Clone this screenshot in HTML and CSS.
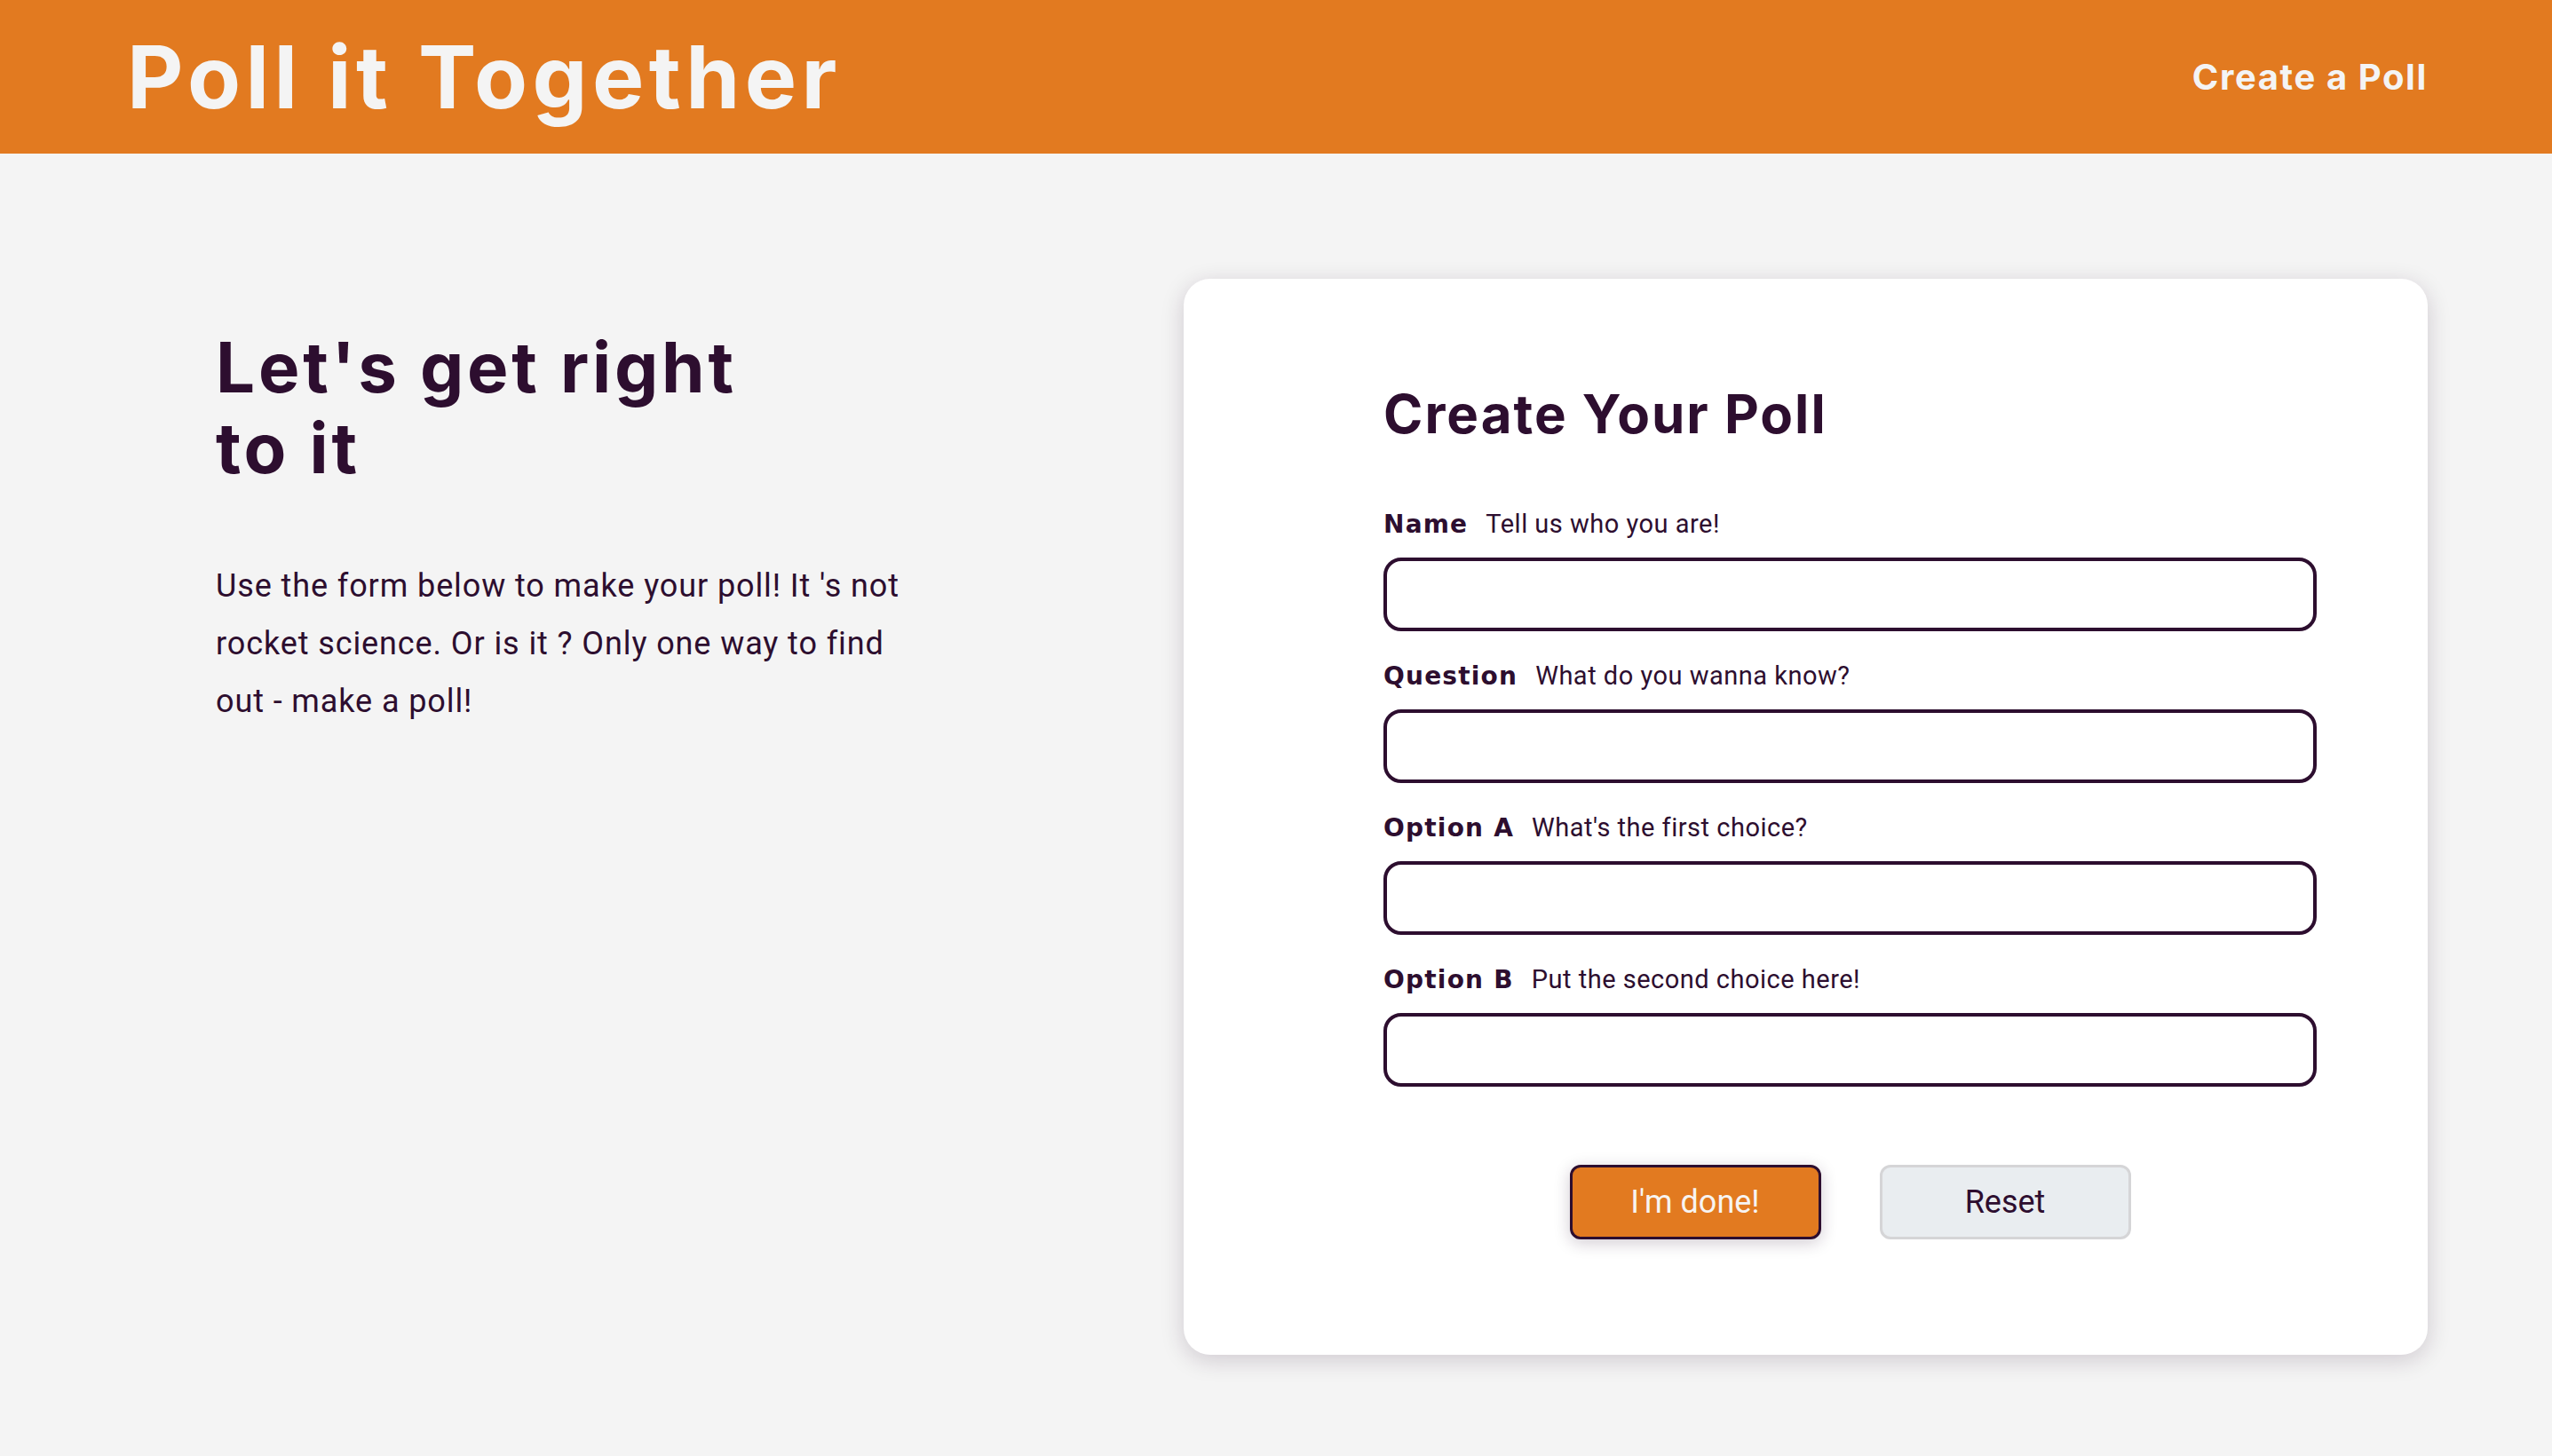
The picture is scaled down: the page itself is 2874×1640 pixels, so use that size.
FILE: index.html
```html
<!DOCTYPE html>
<html lang="en">
<head>
<meta charset="utf-8">
<title>Poll it Together</title>
<link rel="stylesheet" href="styles.css">
</head>
<body>
<header class="topbar">
  <div class="brand">Poll it Together</div>
  <nav class="nav"><a class="nav-link" href="#">Create a Poll</a></nav>
</header>
<main class="page">
  <section class="intro">
    <h1 class="intro-title">Let's get right to it</h1>
    <p class="intro-text">Use the form below to make your poll! It 's not rocket science. Or is it ? Only one way to find out - make a poll!</p>
  </section>
  <section class="card">
    <h2 class="card-title">Create Your Poll</h2>
    <form class="poll-form">
      <div class="field">
        <label class="field-label"><strong>Name</strong><span>Tell us who you are!</span></label>
        <input class="field-input" type="text">
      </div>
      <div class="field">
        <label class="field-label"><strong>Question</strong><span>What do you wanna know?</span></label>
        <input class="field-input" type="text">
      </div>
      <div class="field">
        <label class="field-label"><strong>Option A</strong><span>What's the first choice?</span></label>
        <input class="field-input" type="text">
      </div>
      <div class="field">
        <label class="field-label"><strong>Option B</strong><span>Put the second choice here!</span></label>
        <input class="field-input" type="text">
      </div>
      <div class="actions">
        <button class="btn btn-primary" type="button">I'm done!</button>
        <button class="btn btn-secondary" type="reset">Reset</button>
      </div>
    </form>
  </section>
</main>
</body>
</html>
```
FILE: styles.css
```css
* { box-sizing: border-box; }
html, body { margin: 0; padding: 0; }
body {
  background: #f4f4f4;
  color: #2d0e2f;
  font-family: Roboto, "Liberation Sans", sans-serif;
  width: 2874px;
  height: 1640px;
  overflow: hidden;
}
.topbar {
  height: 173px;
  background: #e27a20;
  display: flex;
  align-items: center;
  justify-content: space-between;
  padding: 0 140px 0 143px;
}
.brand {
  font-family: Inter, "Noto Sans", sans-serif;
  font-weight: 700;
  font-size: 98px;
  line-height: 1;
  color: #f4f4f4;
  letter-spacing: 5.4px;
}
.nav-link {
  font-family: Inter, "Noto Sans", sans-serif;
  font-weight: 700;
  font-size: 40px;
  letter-spacing: 1.6px;
  color: #f4f4f4;
  text-decoration: none;
}
.page {
  display: grid;
  grid-template-columns: 1fr 1401px;
  padding: 141px 140px 0 140px;
}
.intro {
  padding-left: 103px;
  padding-top: 54px;
}
.intro-title {
  margin: 0;
  max-width: 640px;
  font-family: Inter, "Noto Sans", sans-serif;
  font-weight: 700;
  font-size: 78px;
  line-height: 91px;
  letter-spacing: 3.8px;
}
.intro-text {
  margin: 78px 0 0;
  max-width: 800px;
  font-size: 36px;
  line-height: 65px;
  font-weight: 400;
  letter-spacing: 0.9px;
}
.card {
  background: #fff;
  border-radius: 30px;
  box-shadow: 0 6px 26px rgba(46, 16, 48, 0.18);
  padding: 115px 125px 130px 225px;
}
.card-title {
  margin: 0 0 69px;
  font-family: Inter, "Noto Sans", sans-serif;
  font-weight: 700;
  font-size: 60px;
  line-height: 74px;
  letter-spacing: 2px;
}
.poll-form {
  display: flex;
  flex-direction: column;
  gap: 32px;
}
.field {
  display: flex;
  flex-direction: column;
  gap: 20px;
}
.field-label {
  display: flex;
  align-items: baseline;
  gap: 20px;
  height: 36px;
  line-height: 36px;
}
.field-label strong {
  font-family: "DejaVu Sans", Inter, sans-serif;
  font-weight: 700;
  font-size: 28px;
  letter-spacing: 1.2px;
}
.field-label span {
  font-size: 29px;
  letter-spacing: 0.5px;
}
.field-input {
  display: block;
  width: 100%;
  height: 83px;
  border: 4px solid #2d0e2f;
  border-radius: 20px;
  background: #fff;
  font-size: 30px;
  padding: 0 20px;
}
.actions {
  display: flex;
  justify-content: center;
  gap: 66px;
  margin-top: 56px;
}
.btn {
  width: 283px;
  height: 84px;
  border-radius: 12px;
  font-family: Roboto, "Liberation Sans", sans-serif;
  font-size: 36px;
  font-weight: 400;
  cursor: pointer;
}
.btn-primary {
  background: #e27a20;
  color: #f7f4f2;
  border: 3px solid #2d0e2f;
  box-shadow: 0 4px 18px rgba(46, 16, 48, 0.22);
}
.btn-secondary {
  background: #e9edf0;
  color: #2d0e2f;
  border: 3px solid #d5d5d7;
}
```
